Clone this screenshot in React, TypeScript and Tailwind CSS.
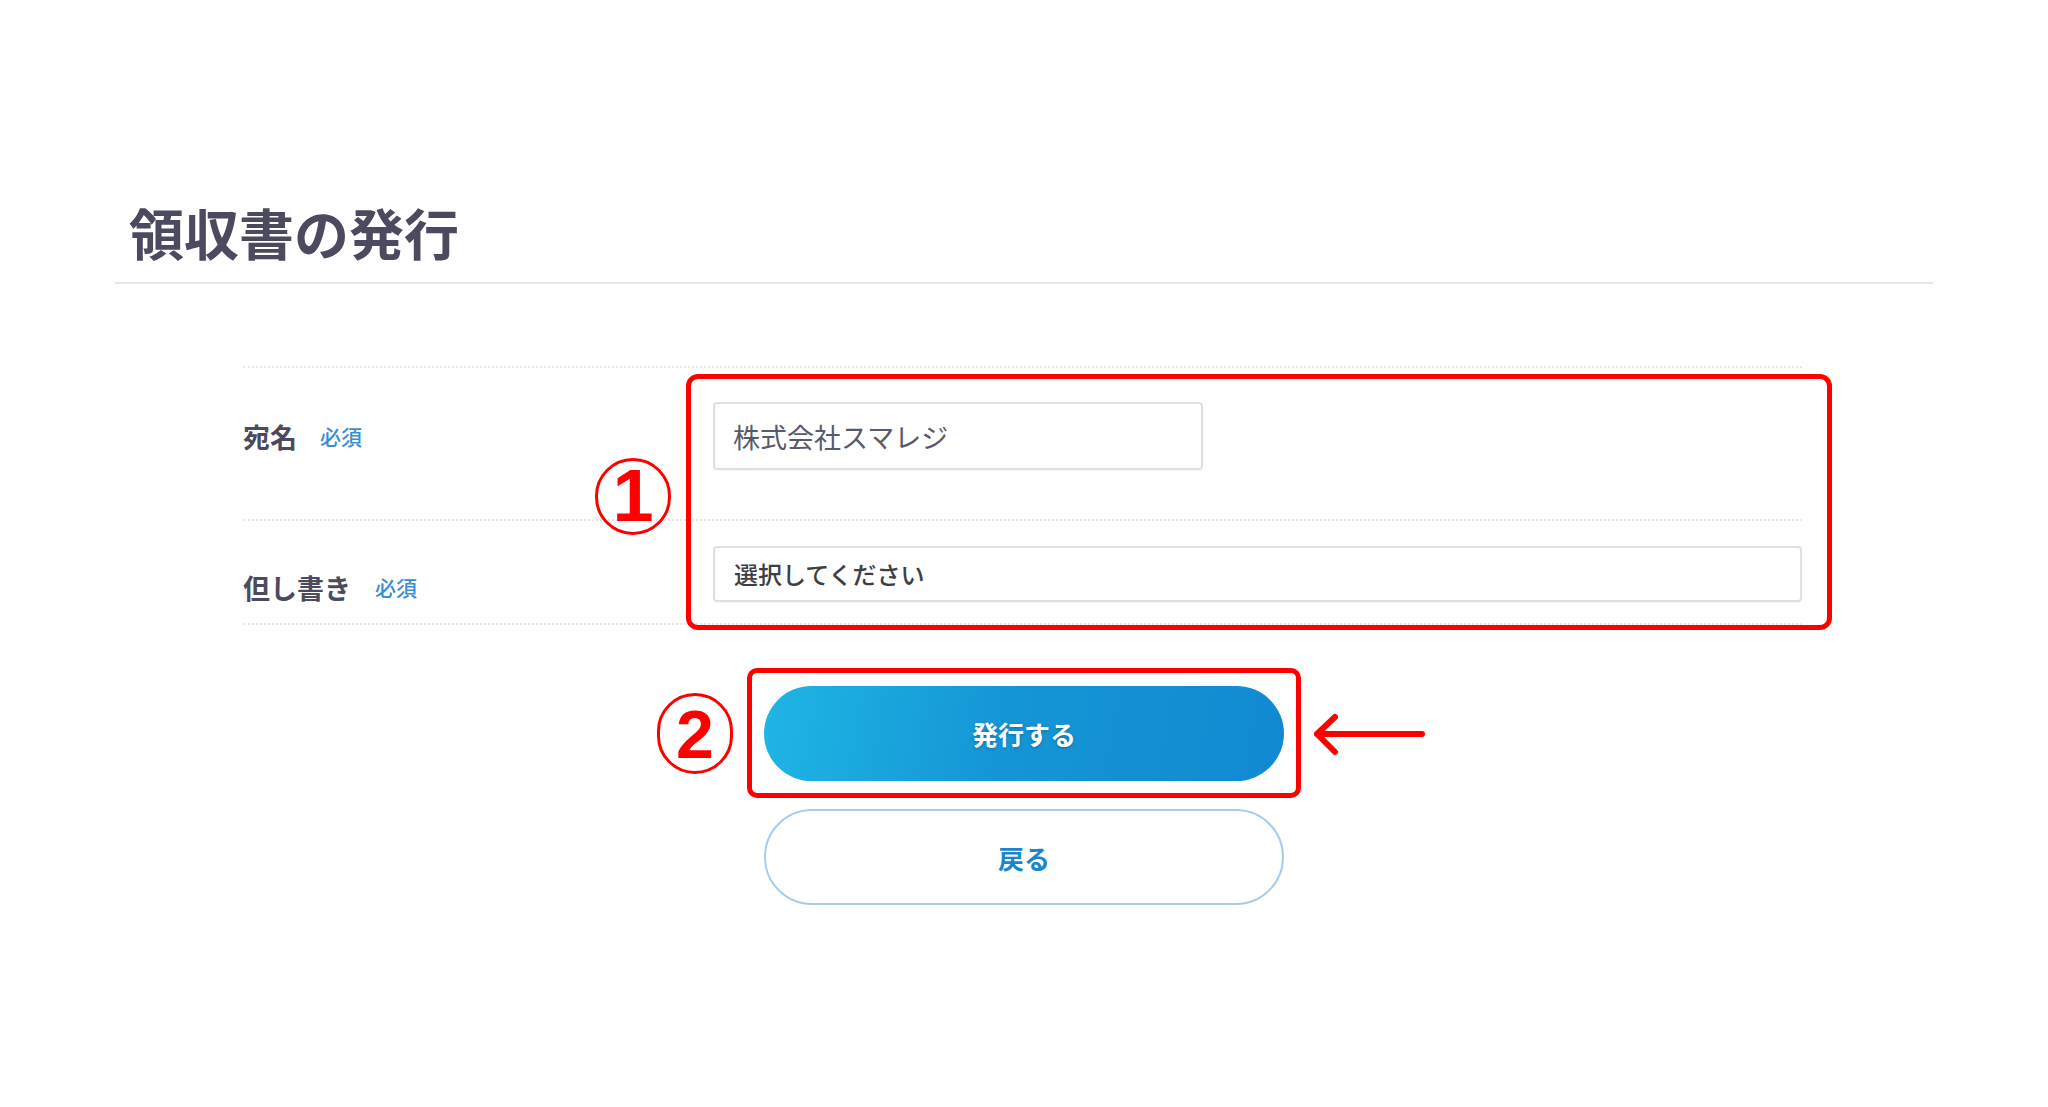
import React from "react";

const JP = "font-['Noto_Sans_CJK_JP','Noto_Sans',sans-serif]";

export default function App() {
  return (
    <div className={`relative w-[2048px] h-[1107px] bg-white overflow-hidden ${JP}`}>
      {/* Title */}
      <div className="px-[115px] pt-[204px]">
        <h1 className="pl-[14px] text-[55px] leading-none font-bold text-[#4b4a5e]">
          領収書の発行
        </h1>
        <div className="mt-[23px] h-[2px] bg-[#e6e6e8]" />
      </div>

      {/* Form */}
      <div className="ml-[243px] w-[1559px] mt-[82px]">
        <div className="flex items-center border-t-2 border-dotted border-[#e8e8e8] pt-[34px] pb-[49px]">
          <div className="w-[470px] flex items-center">
            <span className="text-[27px] font-bold text-[#4b4a5e] leading-none">宛名</span>
            <span className="ml-[23px] text-[21px] font-medium text-[#3a8fd3] leading-none">必須</span>
          </div>
          <div className="w-[490px] h-[68px] border-2 border-[#e0e0e0] rounded-[4px] flex items-center pl-[18px] shadow-[0_1px_1px_rgba(0,0,0,0.04)]">
            <span className="text-[27px] text-[#585a6b] leading-none">株式会社スマレジ</span>
          </div>
        </div>
        <div className="flex items-center border-t-2 border-b-2 border-dotted border-[#e8e8e8] pt-[25px] pb-[21px]">
          <div className="w-[470px] flex items-center pt-[26px]">
            <span className="text-[27px] font-bold text-[#4b4a5e] leading-none">但し書き</span>
            <span className="ml-[24px] text-[21px] font-medium text-[#3a8fd3] leading-none">必須</span>
          </div>
          <div className="flex-1 h-[56px] border-2 border-[#e0e0e0] rounded-[4px] flex items-center pl-[19px] shadow-[0_1px_1px_rgba(0,0,0,0.04)]">
            <span className="text-[24px] font-medium text-[#3e3e44] leading-none">選択してください</span>
          </div>
        </div>
      </div>

      {/* Buttons */}
      <div className="flex flex-col items-center mt-[61px] gap-[28px]">
        <button className="w-[520px] h-[95px] rounded-full bg-[linear-gradient(100deg,#1fb6e4_0%,#1596d6_45%,#1189d1_100%)] text-white text-[26px] font-bold [text-shadow:0_1px_3px_rgba(0,0,0,0.25)]">
          発行する
        </button>
        <button className="w-[520px] h-[96px] rounded-full border-2 border-[#a8cdea] bg-white text-[#1a86cc] text-[26px] font-bold">
          戻る
        </button>
      </div>

      {/* Annotations */}
      <div className="absolute left-[686px] top-[374px] w-[1146px] h-[256px] border-[5px] border-[#ff0000] rounded-[12px]" />
      <div className="absolute left-[595px] top-[458px] w-[76px] h-[77px] rounded-full border-[3px] border-[#ff0000] flex items-center justify-center">
        <span className="font-['Liberation_Sans',sans-serif] font-bold text-[74px] leading-none text-[#ff0000] -mt-[2px]">1</span>
      </div>

      <div className="absolute left-[747px] top-[668px] w-[554px] h-[130px] border-[5px] border-[#ff0000] rounded-[10px]" />
      <div className="absolute left-[657px] top-[693px] w-[76px] h-[81px] rounded-full border-[3px] border-[#ff0000] flex items-center justify-center">
        <span className="font-['Liberation_Sans',sans-serif] font-bold text-[68px] leading-none text-[#ff0000]">2</span>
      </div>

      <svg className="absolute left-[1308px] top-[709px]" width="124" height="52" viewBox="0 0 124 52">
        <path d="M9 25 L114 25 M27 8 L9 25 L27 43" fill="none" stroke="#ff0000" strokeWidth="6" strokeLinecap="round" strokeLinejoin="round" />
      </svg>
    </div>
  );
}
